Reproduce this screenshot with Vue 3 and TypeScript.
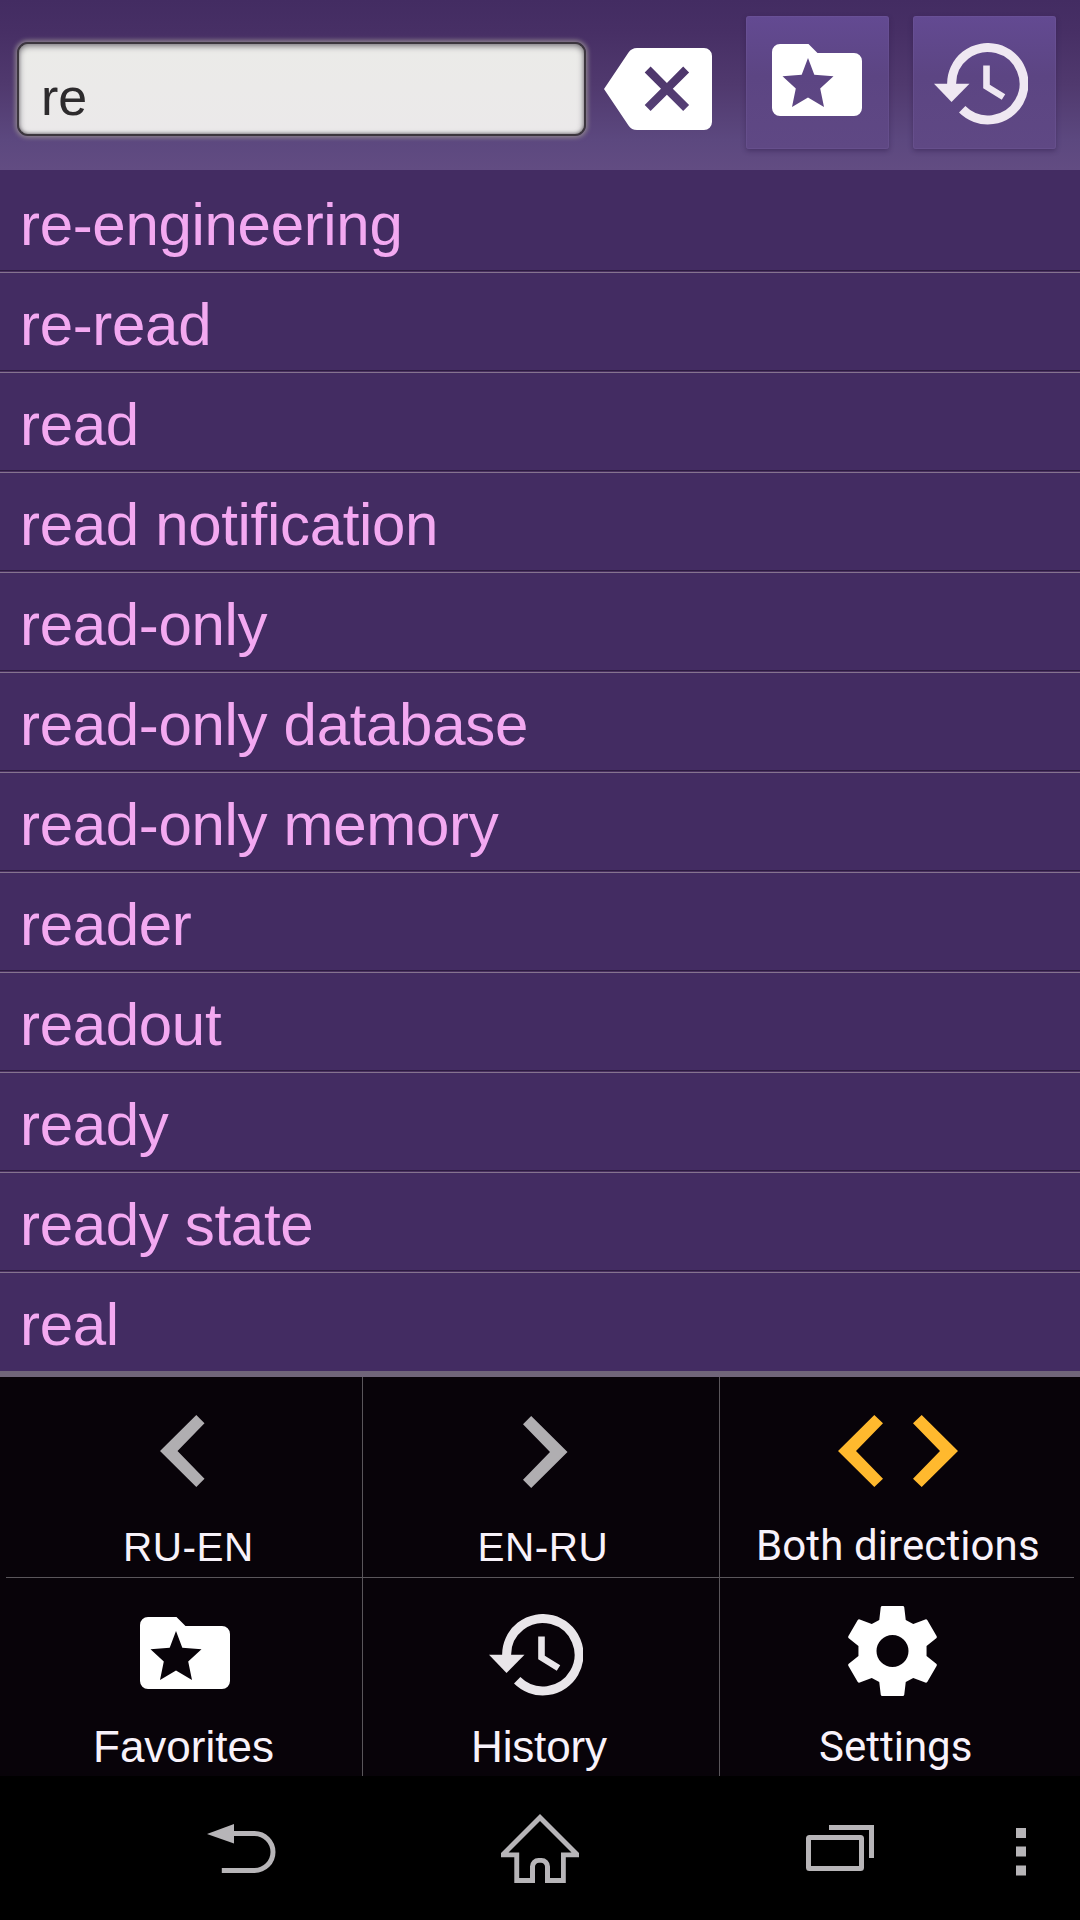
<script setup lang="ts">
interface MenuItem {
  label: string
  icon: 'left' | 'right' | 'both' | 'folder' | 'history' | 'gear'
}

const query = 're'

const words: string[] = [
  're-engineering',
  're-read',
  'read',
  'read notification',
  'read-only',
  'read-only database',
  'read-only memory',
  'reader',
  'readout',
  'ready',
  'ready state',
  'real',
]

const menu: MenuItem[] = [
  { label: 'RU-EN', icon: 'left' },
  { label: 'EN-RU', icon: 'right' },
  { label: 'Both directions', icon: 'both' },
  { label: 'Favorites', icon: 'folder' },
  { label: 'History', icon: 'history' },
  { label: 'Settings', icon: 'gear' },
]

const folderPath =
  'M8 0H36.5L45.5 9H82A8 8 0 0 1 90 17V64A8 8 0 0 1 82 72H8A8 8 0 0 1 0 64V8A8 8 0 0 1 8 0Z' +
  'M36 14L29.7 30.7L10.5 32.3L23.8 44.5L20 63L36 53.6L52 63L48.2 44.5L61.5 32.3L42.3 30.7Z'
const arrowPath = 'M0 40.7H35.5L17.5 59Z'
const ringPath = 'M17.6 41A36.2 36.2 0 1 1 28.2 66.3'
const handPath = 'M52.5 22.5V43.5L69.5 54'
const gearPath =
  'M34 0H54.5Q55.8 0 56 1.3L57.5 14L65 18L77 13.4Q78.3 13 79 14L88.3 30Q89 31.4 88 32.3L78.3 40V50L88 57.7Q89 58.6 88.3 60L79 76Q78.3 77 77 76.6L65 72L57.5 76L56 88.7Q55.8 90 54.5 90H34Q32.7 90 32.5 88.7L31 76L23.5 72L11.5 76.6Q10.2 77 9.5 76L.2 60Q-.5 58.6 .5 57.7L10.2 50V40L.5 32.3Q-.5 31.4 .2 30L9.5 14Q10.2 13 11.5 13.4L23.5 18L31 14L32.5 1.3Q32.7 0 34 0Z' +
  'M60.25 45A16 16 0 1 0 28.25 45A16 16 0 1 0 60.25 45Z'
</script>

<template>
  <div class="screen">
    <header class="top">
      <div class="field">{{ query }}</div>
      <svg class="clear" width="108" height="82" viewBox="0 0 108 82">
        <path
          fill="#fff"
          fill-rule="evenodd"
          d="M0 41L24.5 4.5Q27.5 0 33 0H100A8 8 0 0 1 108 8V74A8 8 0 0 1 100 82H33Q27.5 82 24.5 77.5ZM40.7 24.5L57 40.8L40.7 57.1L46.6 63L62.9 46.7L79.2 63L85.1 57.1L68.8 40.8L85.1 24.5L79.2 18.6L62.9 34.9L46.6 18.6Z"
        />
      </svg>
      <button class="tool first">
        <svg class="tool-folder" width="90" height="72" viewBox="0 0 90 72">
          <path fill="#fff" fill-rule="evenodd" :d="folderPath" />
        </svg>
      </button>
      <button class="tool second">
        <svg class="tool-history" width="94" height="82" viewBox="0 0 94 82">
          <path :d="arrowPath" fill="#efe8f2" />
          <path :d="ringPath" fill="none" stroke="#efe8f2" stroke-width="9" />
          <path :d="handPath" fill="none" stroke="#efe8f2" stroke-width="6.6" />
        </svg>
      </button>
    </header>

    <ul class="words">
      <li v-for="word in words" :key="word">{{ word }}</li>
    </ul>

    <section class="menu">
      <div v-for="item in menu" :key="item.icon" class="cell" :class="item.icon">
        <svg v-if="item.icon === 'left'" width="45" height="72" viewBox="0 0 45 72">
          <path d="M36.3 0L44.5 8.3L17.5 36L44.5 63.7L36.3 72L0 36Z" fill="#b0aeb1" />
        </svg>
        <svg v-else-if="item.icon === 'right'" width="45" height="72" viewBox="0 0 45 72">
          <path d="M8.2 0L0 8.3L27 36L0 63.7L8.2 72L44.5 36Z" fill="#b0aeb1" />
        </svg>
        <svg v-else-if="item.icon === 'both'" width="120" height="72" viewBox="0 0 120 72">
          <path
            d="M36.3 0L45 8.3L18 36L45 63.7L36.3 72L0 36ZM83.7 0L75 8.3L102 36L75 63.7L83.7 72L120 36Z"
            fill="#ffb92e"
          />
        </svg>
        <svg v-else-if="item.icon === 'folder'" width="90" height="72" viewBox="0 0 90 72">
          <path fill="#fff" fill-rule="evenodd" :d="folderPath" />
        </svg>
        <svg v-else-if="item.icon === 'history'" width="94" height="82" viewBox="0 0 94 82">
          <path :d="arrowPath" fill="#e9e6ea" />
          <path :d="ringPath" fill="none" stroke="#e9e6ea" stroke-width="9" />
          <path :d="handPath" fill="none" stroke="#e9e6ea" stroke-width="6.6" />
        </svg>
        <svg v-else width="89" height="90" viewBox="0 0 88.5 90">
          <path fill="#fff" fill-rule="evenodd" :d="gearPath" />
        </svg>
        <span class="label">{{ item.label }}</span>
      </div>
    </section>

    <nav class="system">
      <svg class="back" width="69" height="50" viewBox="0 0 69 50">
        <path d="M0 10L27 0V19.5Z" fill="#b7b5b8" />
        <path d="M26 9.5H47.500A18.5 18.5 0 0 1 47.5 46.5H14.8" fill="none" stroke="#b7b5b8" stroke-width="5" />
      </svg>
      <svg class="home" width="80" height="70" viewBox="0 0 80 70">
        <path
          fill="#b7b5b8"
          fill-rule="evenodd"
          d="M40 0L1 39V43.3H14.3V69H35V53A4 4 0 0 1 39 48.8H41A4 4 0 0 1 45 53V69H65.8V43.3H79V39ZM40 7L8.5 38.5H19.2V64H30V52.5A8.5 8.5 0 0 1 38.5 44H41.5A8.5 8.5 0 0 1 50 52.5V64H61V38.5H71.5Z"
        />
      </svg>
      <svg class="recent" width="69" height="47" viewBox="0 0 69 47">
        <rect x="2.5" y="12.5" width="53" height="31" rx="1" fill="none" stroke="#b7b5b8" stroke-width="5" />
        <path d="M23 2.5H65.5V33" fill="none" stroke="#b7b5b8" stroke-width="5" />
      </svg>
      <svg class="more" width="10" height="48" viewBox="0 0 10 48">
        <path d="M0 0H10V10H0ZM0 18.5H10V28.5H0ZM0 37.5H10V47.5H0Z" fill="#b7b5b8" />
      </svg>
    </nav>
  </div>
</template>

<style>
body {
  background: #000;
}
</style>

<style scoped>
.screen {
  width: 1080px;
  height: 1920px;
  overflow: hidden;
  display: flex;
  flex-direction: column;
  background: #000;
  font-family: 'Liberation Sans', Arial, sans-serif;
}

svg {
  display: block;
  flex: none;
}

.top {
  height: 170px;
  flex: none;
  display: flex;
  align-items: flex-start;
  background: linear-gradient(#432c62 0, #472f65 32px, #50396e 85px, #5c487f 140px, #624c82 170px);
}

.field {
  box-sizing: border-box;
  width: 569px;
  height: 94px;
  margin: 42px 0 0 17px;
  padding: 23px 0 0 22px;
  border: 2px solid #3c363e;
  border-radius: 11px;
  background: linear-gradient(#ebebe8, #ebe9ea);
  box-shadow: 0 0 4px 2px #8a7f8c, inset 0 2px 6px #77737a, inset 0 -1px 3px #99959b;
  color: #2d2b2d;
  font-size: 52px;
  line-height: 60px;
}

.clear {
  margin: 48px 0 0 18px;
}

.tool {
  width: 143px;
  height: 133px;
  margin: 16px 0 0;
  padding: 0;
  border: 0;
  border-radius: 3px;
  display: flex;
  align-items: flex-start;
  background: linear-gradient(#634a92, #5c4583 45%, #5f4884);
  box-shadow: 0 2px 5px rgba(45, 25, 70, 0.45), inset 0 0 0 1px rgba(125, 100, 165, 0.25);
}

.first {
  margin-left: 34px;
}

.second {
  margin-left: 24px;
}

.tool-folder {
  margin: 28px 0 0 26px;
}

.tool-history {
  margin: 26.5px 0 0 21px;
}

.words {
  flex: none;
  height: 1207px;
  box-sizing: border-box;
  margin: 0;
  padding: 3px 0 0;
  list-style: none;
  background: #432c62;
  border-bottom: 6px solid #706579;
}

.words li {
  box-sizing: border-box;
  height: 100px;
  padding: 17px 0 0 20px;
  border-bottom: 1px solid #85738f;
  box-shadow: inset 0 -1px #49305f, inset 0 -2px #2c1b40;
  color: #f3a9f1;
  font-size: 60px;
  line-height: 69px;
  letter-spacing: -0.32px;
  font-variant-ligatures: common-ligatures;
  white-space: nowrap;
}

.words li:last-child {
  height: 98px;
  border: 0;
  box-shadow: none;
}

.menu {
  flex: none;
  height: 399px;
  box-sizing: border-box;
  display: grid;
  grid-template-columns: 357px 357px 354px;
  grid-template-rows: 201px 198px;
  padding: 0 6px;
  background: #080309;
}

.cell {
  box-sizing: border-box;
  border-right: 1px solid #5a565b;
  display: flex;
  flex-direction: column;
  align-items: flex-start;
}

.cell:nth-child(3n) {
  border-right: 0;
}

.cell:nth-child(-n + 3) {
  border-bottom: 1px solid #5a565b;
}

.label {
  color: #f8f2fa;
  height: 50px;
  line-height: 50px;
  white-space: nowrap;
}

.left svg {
  margin: 38px 0 0 154px;
}

.left .label {
  margin: 35px 0 0 117px;
  font-size: 40.5px;
  letter-spacing: 0.5px;
}

.right svg {
  margin: 39px 0 0 160px;
}

.right .label {
  margin: 34px 0 0 114.5px;
  font-size: 40.5px;
  letter-spacing: 0.5px;
}

.both svg {
  margin: 38px 0 0 118px;
}

.both .label {
  margin: 34px 0 0 36px;
  font: 42px/50px Roboto, sans-serif;
  letter-spacing: 0.1px;
}

.folder svg {
  margin: 39px 0 0 134px;
}

.folder .label {
  margin: 33px 0 0 87px;
  font-size: 44px;
}

.history svg {
  margin: 35.5px 0 0 126px;
}

.history .label {
  margin: 26.5px 0 0 108px;
  font-size: 44px;
  letter-spacing: -0.15px;
}

.gear svg {
  margin: 28px 0 0 127.5px;
}

.gear .label {
  margin: 26px 0 0 99px;
  font: 42px/50px Roboto, sans-serif;
}

.system {
  flex: 1;
  display: flex;
  align-items: flex-start;
  background: #000;
}

.back {
  margin: 48px 0 0 207px;
}

.home {
  margin: 38px 0 0 224px;
}

.recent {
  margin: 49px 0 0 226px;
}

.more {
  margin: 52px 0 0 141px;
}
</style>
